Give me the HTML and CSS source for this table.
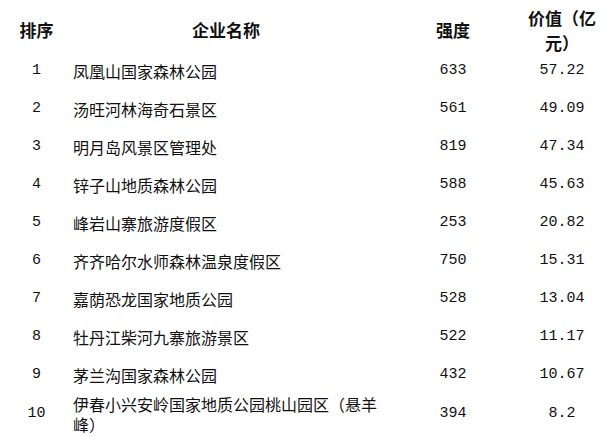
FILE: index.html
```html
<!DOCTYPE html>
<html lang="zh-CN">
<head>
<meta charset="utf-8">
<title>企业排名</title>
<link rel="stylesheet" href="styles.css">
</head>
<body>
<div class="table">
  <div class="row head">
    <div class="c rank">排序</div>
    <div class="c name">企业名称</div>
    <div class="c num">强度</div>
    <div class="c val">价值（亿元）</div>
  </div>
  <div class="row"><div class="c rank">1</div><div class="c name">凤凰山国家森林公园</div><div class="c num">633</div><div class="c val">57.22</div></div>
  <div class="row"><div class="c rank">2</div><div class="c name">汤旺河林海奇石景区</div><div class="c num">561</div><div class="c val">49.09</div></div>
  <div class="row"><div class="c rank">3</div><div class="c name">明月岛风景区管理处</div><div class="c num">819</div><div class="c val">47.34</div></div>
  <div class="row"><div class="c rank">4</div><div class="c name">锌子山地质森林公园</div><div class="c num">588</div><div class="c val">45.63</div></div>
  <div class="row"><div class="c rank">5</div><div class="c name">峰岩山寨旅游度假区</div><div class="c num">253</div><div class="c val">20.82</div></div>
  <div class="row"><div class="c rank">6</div><div class="c name">齐齐哈尔水师森林温泉度假区</div><div class="c num">750</div><div class="c val">15.31</div></div>
  <div class="row"><div class="c rank">7</div><div class="c name">嘉荫恐龙国家地质公园</div><div class="c num">528</div><div class="c val">13.04</div></div>
  <div class="row"><div class="c rank">8</div><div class="c name">牡丹江柴河九寨旅游景区</div><div class="c num">522</div><div class="c val">11.17</div></div>
  <div class="row"><div class="c rank">9</div><div class="c name">茅兰沟国家森林公园</div><div class="c num">432</div><div class="c val">10.67</div></div>
  <div class="row last"><div class="c rank">10</div><div class="c name">伊春小兴安岭国家地质公园桃山园区（悬羊峰）</div><div class="c num">394</div><div class="c val">8.2</div></div>
</div>
</body>
</html>
```
FILE: styles.css
```css
html, body {
  margin: 0;
  padding: 0;
  background: #ffffff;
}
body {
  width: 614px;
  height: 436px;
  overflow: hidden;
  color: #111111;
  font-family: "Noto Sans CJK SC", "Noto Sans", sans-serif;
}
.table {
  padding-top: 8px;
  display: flex;
  flex-direction: column;
}
.row {
  display: grid;
  grid-template-columns: 73px 306px 148px 70px;
  height: 38px;
  align-items: center;
}
.row.head {
  height: 44px;
}
.row.last {
  height: 40px;
}
.c {
  font-size: 16px;
  line-height: 20px;
}
.rank, .num, .val {
  text-align: center;
  font-family: "Liberation Mono", "DejaVu Sans Mono", monospace;
  font-size: 15px;
}
.name {
  text-align: left;
}
.head .c {
  font-family: "Noto Sans CJK SC", "Noto Sans", sans-serif;
  font-weight: 700;
  font-size: 17px;
  text-align: center;
}
.head .val {
  line-height: 25px;
  margin: -3px 0;
}
```
